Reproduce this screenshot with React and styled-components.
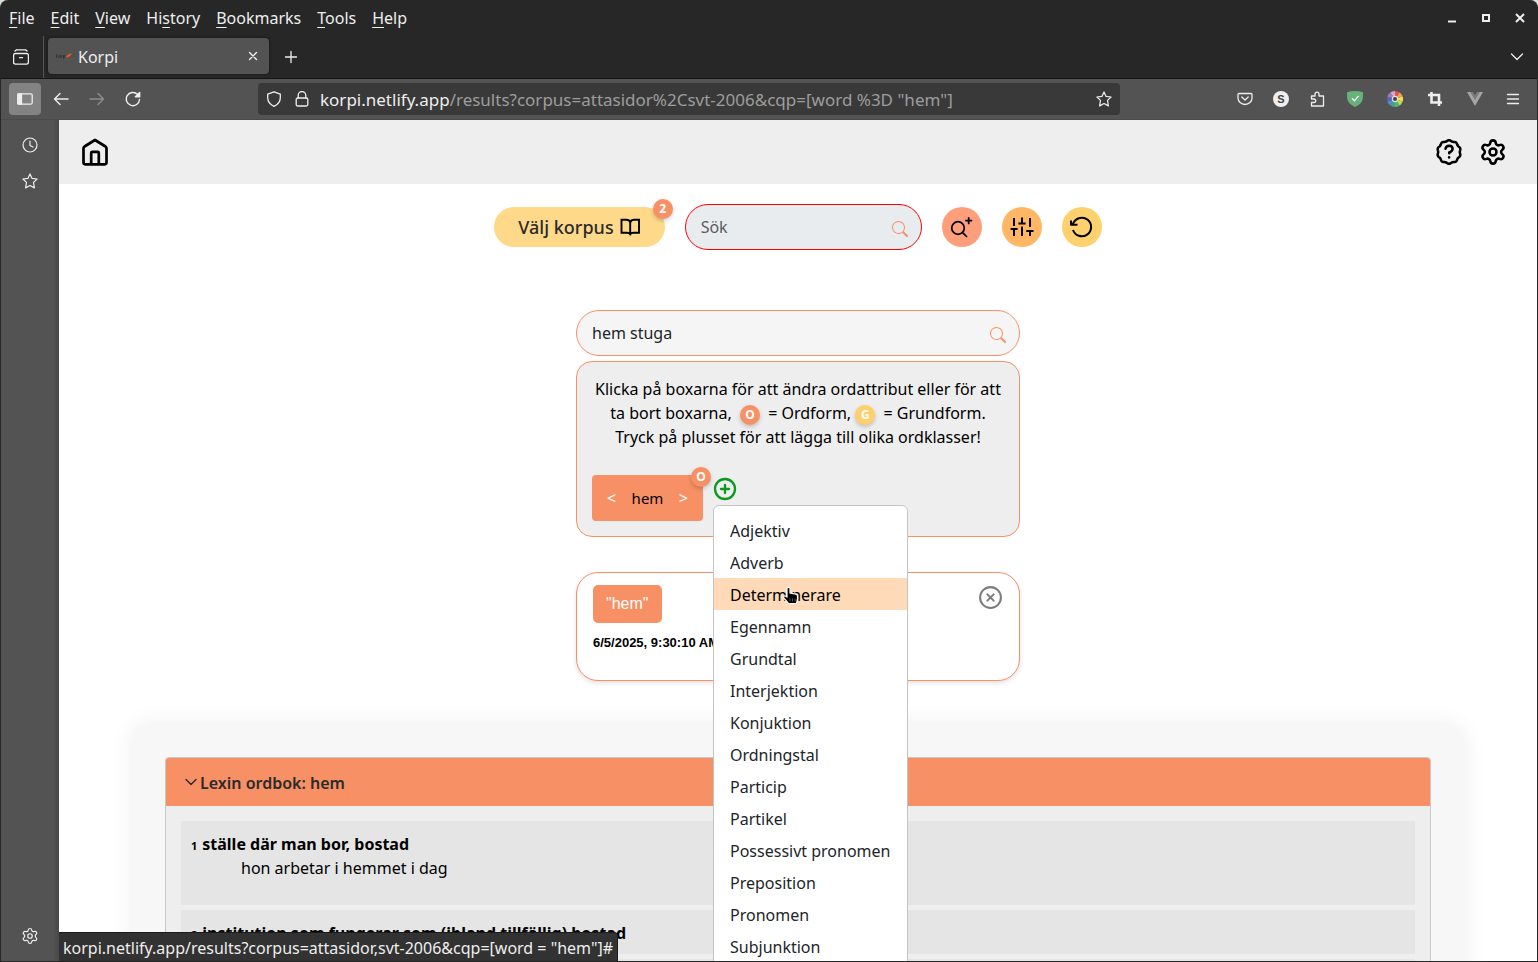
import React from "react";
import styled, { createGlobalStyle } from "styled-components";
import { Settings, CirclePlus, CircleX, Clock } from "lucide-react";
import { BsSearch } from "react-icons/bs";

const GlobalStyle = createGlobalStyle`
  * { box-sizing: border-box; }
  body {
    margin: 0;
    background: #d9dfda;
    font-family: "Noto Sans", sans-serif;
    font-size: 16px;
    line-height: 24px;
    color: #000;
  }
  button, input { font: inherit; color: inherit; }
  button { border: 0; padding: 0; background: none; cursor: pointer; }
  svg { display: block; flex: none; }
`;

/* ---------- Browser frame ---------- */

const Window = styled.div`
  display: flex;
  flex-direction: column;
  height: 100vh;
  overflow: hidden;
  border: solid #272727;
  border-width: 0 1px 1px;
  border-radius: 8px 8px 0 0;
  background: #272727;
  color: #eee;
`;

const MenuBar = styled.nav`
  display: flex;
  align-items: center;
  height: 36px;
  flex: none;
`;

const MenuItem = styled.button`
  padding: 0 8px;
  height: 32px;
  u { text-underline-offset: 3px; text-decoration-thickness: 1px; }
`;

const WindowButtons = styled.div`
  display: flex;
  margin-left: auto;
  gap: 10px;
  padding-right: 5px;
`;

const IconButton = styled.button`
  display: flex;
  align-items: center;
  justify-content: center;
  width: ${(p) => p.$w || 36}px;
  height: 32px;
  border-radius: 4px;
  background: ${(p) => (p.$active ? "#838383" : "none")};
  color: ${(p) => (p.$dim ? "#8c8c8c" : "#eee")};
  flex: none;
`;

const TabBar = styled.div`
  display: flex;
  align-items: center;
  height: 43px;
  padding: 0 2px;
  border-bottom: 1px solid #151515;
  flex: none;
`;

const TabDivider = styled.span`
  width: 1px;
  align-self: stretch;
  margin: 0 4px 0 4px;
  background: #555;
`;

const Tab = styled.div`
  display: flex;
  align-items: center;
  width: 221px;
  height: 36px;
  margin-bottom: 2px;
  padding-left: 8px;
  gap: 6px;
  border-radius: 4px;
  background: #535353;
  box-shadow: 0 0 3px #111;
`;

const TabTitle = styled.span`
  flex: 1;
  padding-top: 2px;
`;

const Grow = styled.span`
  flex: 1;
`;

const ToolBar = styled.div`
  display: flex;
  align-items: center;
  height: 41px;
  padding: 0 6px 0 8px;
  background: #535353;
  border-bottom: 1px solid #4a4a4a;
  flex: none;
`;

const Gap = styled.span`
  width: 2px;
`;

const Spring = styled.span`
  flex: 0 1 107px;
`;

const UrlBar = styled.div`
  display: flex;
  align-items: center;
  flex: 1;
  min-width: 0;
  height: 32px;
  padding: 0 2px;
  border-radius: 4px;
  background: #393939;
  color: #ddd;
`;

const Url = styled.div`
  flex: 1;
  padding: 2px 0 0 4px;
  white-space: nowrap;
  overflow: hidden;
  font-size: 17px;
  color: #9d9d9d;
  b { font-weight: 400; color: #eee; }
`;

const Initial = styled.span`
  width: 16px;
  height: 16px;
  border-radius: 50%;
  background: #eee;
  color: #444;
  font: 700 11px/16px "Liberation Sans", sans-serif;
  text-align: center;
`;

const Content = styled.div`
  display: flex;
  flex: 1;
  min-height: 0;
`;

const SideBar = styled.aside`
  display: flex;
  flex-direction: column;
  align-items: center;
  justify-content: space-between;
  width: 58px;
  padding: 9px 0;
  background: linear-gradient(to right, #535353 52px, #484848);
  flex: none;
`;

const SideGroup = styled.div`
  display: flex;
  flex-direction: column;
  gap: 4px;
`;

const StatusLine = styled.div`
  position: absolute;
  left: 0;
  bottom: 0;
  z-index: 5;
  padding: 3px 4px 1px;
  border: solid #1b1b1b;
  border-width: 1px 1px 0 0;
  border-radius: 0 4px 0 0;
  background: #323232;
  color: #eee;
`;

/* ---------- Korpi page ---------- */

const Page = styled.div`
  position: relative;
  flex: 1;
  min-width: 0;
  overflow: hidden;
  background: #fff;
  color: #000;
`;

const Header = styled.header`
  display: flex;
  align-items: center;
  gap: 12px;
  height: 64px;
  padding: 0 28px 0 20px;
  background: #eee;
`;

const HomeLink = styled.a`
  margin-right: auto;
  color: #000;
`;

const HeaderButton = styled.button`
  display: flex;
  align-items: center;
  justify-content: center;
  width: 32px;
  height: 32px;
`;

const Main = styled.main`
  display: flex;
  flex-direction: column;
  padding-top: 20px;
`;

const SearchRow = styled.div`
  display: flex;
  align-items: center;
  justify-content: center;
  gap: 20px;
  margin-bottom: 60px;
`;

const CorpusButton = styled.button`
  position: relative;
  display: flex;
  align-items: center;
  gap: 4px;
  height: 40px;
  padding: 0 23px 0 24px;
  border-radius: 20px;
  background: #ffd98a;
  color: #2b2b2b;
  font-size: 18px;
  font-weight: 500;
  svg { color: #000; }
`;

const Badge = styled.span`
  display: inline-flex;
  align-items: center;
  justify-content: center;
  width: 20px;
  height: 20px;
  border-radius: 50%;
  background: ${(p) => (p.$base ? "#ffcf6b" : "#f79065")};
  color: #fff;
  font-size: 12px;
  line-height: 20px;
  font-weight: 700;
  box-shadow: 0 2px 4px rgba(0, 0, 0, 0.2);
`;

const InlineBadge = styled(Badge)`
  margin-right: 4px;
  vertical-align: middle;
`;

const CornerBadge = styled(Badge)`
  position: absolute;
  top: -8px;
  right: -8px;
`;

const Field = styled.label`
  display: flex;
  align-items: center;
  width: ${(p) => p.$w};
  height: 46px;
  padding: 0 13px 0 15px;
  border: 1px solid ${(p) => (p.$invalid ? "#f00" : "#f79065")};
  border-radius: 24px;
  background: ${(p) => (p.$invalid ? "#e9ecef" : "#f5f5f5")};
  svg { color: #f79065; margin-top: 3px; }
`;

const TextInput = styled.input`
  flex: 1;
  min-width: 0;
  border: 0;
  padding: 0;
  outline: 0;
  background: none;
  color: #212529;
  &::placeholder { color: #595c5f; opacity: 1; }
`;

const RoundButton = styled.button`
  display: flex;
  align-items: center;
  justify-content: center;
  width: 40px;
  height: 40px;
  border-radius: 50%;
  background: ${(p) => p.$bg};
`;

const Column = styled.div`
  display: flex;
  flex-direction: column;
  width: 444px;
  max-width: 100%;
  margin: 0 auto 44px;
`;

const Builder = styled.section`
  margin: 5px 0 35px;
  padding: 15px;
  border: 1px solid #f79065;
  border-radius: 16px;
  background: #eee;
`;

const Help = styled.p`
  margin: 0 0 26px;
  text-align: center;
`;

const Tokens = styled.div`
  display: flex;
  align-items: flex-start;
  gap: 10px;
`;

const WordBox = styled.div`
  position: relative;
  display: flex;
  align-items: center;
  justify-content: space-between;
  width: 111px;
  height: 46px;
  padding: 0 15px;
  border-radius: 4px;
  background: #f79065;
  font-size: 15px;
`;

const Step = styled.button`
  color: #fff;
  font-size: 16px;
`;

const AddWrap = styled.div`
  position: relative;
  padding-top: 2px;
`;

const AddButton = styled.button`
  display: flex;
  color: #0b9a1e;
`;

const Menu = styled.ul`
  position: absolute;
  top: 30px;
  left: 0;
  z-index: 3;
  width: 195px;
  margin: 0;
  padding: 8px 0;
  list-style: none;
  border: 1px solid #c4c4c4;
  border-radius: 6px;
  background: #fff;
`;

const MenuChoice = styled.button`
  display: block;
  width: 100%;
  padding: 5px 16px 3px;
  text-align: left;
  white-space: nowrap;
  color: ${(p) => (p.$hover ? "#000" : "#212529")};
  background: ${(p) => (p.$hover ? "#ffdab9" : "none")};
`;

const Pointer = styled.svg`
  position: absolute;
  top: 80px;
  left: 68px;
  pointer-events: none;
`;

const HistoryCard = styled.section`
  display: flex;
  align-items: flex-start;
  justify-content: space-between;
  min-height: 109px;
  padding: 12px 16px;
  border: 1px solid #f79065;
  border-radius: 22px;
  background: #fff;
  box-shadow: 0 2px 5px rgba(0, 0, 0, 0.12);
  font-family: "Liberation Sans", sans-serif;
`;

const QueryChip = styled.button`
  display: block;
  height: 38px;
  padding: 0 14px 0 13px;
  margin-bottom: 7px;
  border-radius: 5px;
  background: #f79065;
  color: #fff;
`;

const Stamp = styled.time`
  font-size: 13px;
  font-weight: 700;
`;

const CloseButton = styled.button`
  display: flex;
  color: #7d7d7d;
`;

const Results = styled.section`
  margin: 0 74px;
  padding: 32px;
  border-radius: 16px;
  background: #f7f7f7;
  box-shadow: 0 0 24px rgba(0, 0, 0, 0.08);
`;

const Accordion = styled.div`
  border: 1px solid #c8c8c8;
  border-radius: 4px;
  background: #eee;
  overflow: hidden;
`;

const AccordionHead = styled.button`
  display: flex;
  align-items: center;
  gap: 3px;
  width: 100%;
  height: 48px;
  padding: 2px 19px 0;
  background: #f79065;
  color: #2b2b2b;
  font-weight: 600;
`;

const Senses = styled.div`
  display: flex;
  flex-direction: column;
  gap: 5px;
  padding: 15px;
`;

const Sense = styled.article`
  min-height: 44px;
  padding: 11px 10px 9px;
  background: #e5e5e5;
  b { font-weight: 700; }
  small { font-size: 11px; line-height: 1; font-weight: 700; margin-right: 5px; }
  p { margin: 0 0 16px 50px; }
`;

/* ---------- Icons ---------- */

const Icon = ({ size = 16, sw = 1.2, box = 16, children }) => (
  <svg width={size} height={size} viewBox={`0 0 ${box} ${box}`} fill="none" stroke="currentColor"
    strokeWidth={sw} strokeLinecap="round" strokeLinejoin="round" aria-hidden="true">
    {children}
  </svg>
);

const Star = () => (
  <Icon><path d="M8 .9l2.1 4.5 5 .6-3.6 3.4.9 5.5-4.4-2.4-4.4 2.4.9-5.5L.9 6l5-.6z" /></Icon>
);

const scallop = Array.from({ length: 121 }, (_, i) => {
  const a = (i / 120) * Math.PI * 2;
  const r = 11.3 + 0.5 * Math.cos(10 * a);
  return `${i ? "L" : "M"}${(16 + r * Math.sin(a)).toFixed(2)} ${(16 - r * Math.cos(a)).toFixed(2)}`;
}).join("") + "z";

const wheel = ["#e94f4f", "#f5a04c", "#f3e25a", "#b6dc5a", "#58b868", "#45a08c", "#4c8fd0", "#5a62b8", "#9a7cc8", "#d8a8d0"];
const ringPoint = (i, r) => {
  const a = (i / wheel.length) * Math.PI * 2;
  return `${(8 + r * Math.sin(a)).toFixed(2)} ${(8 - r * Math.cos(a)).toFixed(2)}`;
};

/* ---------- Data ---------- */

const menus = [["", "F", "ile"], ["", "E", "dit"], ["", "V", "iew"], ["Hi", "s", "tory"], ["", "B", "ookmarks"], ["", "T", "ools"], ["", "H", "elp"]];

const wordClasses = ["Adjektiv", "Adverb", "Determinerare", "Egennamn", "Grundtal", "Interjektion", "Konjuktion",
  "Ordningstal", "Particip", "Partikel", "Possessivt pronomen", "Preposition", "Pronomen", "Subjunktion"];

export default function App() {
  return (
    <>
      <GlobalStyle />
      <Window>
        <MenuBar>
          {menus.map(([a, k, b]) => <MenuItem key={k + b}>{a}<u>{k}</u>{b}</MenuItem>)}
          <WindowButtons>
            <IconButton $w={24} aria-label="Minimize"><Icon size={10} box={10} sw={2}><path strokeLinecap="butt" d="M1 8.5h8" /></Icon></IconButton>
            <IconButton $w={24} aria-label="Maximize"><Icon size={10} box={10} sw={2}><path strokeLinejoin="miter" d="M2 2h6v6H2z" /></Icon></IconButton>
            <IconButton $w={24} aria-label="Close window"><Icon size={10} box={10} sw={2}><path strokeLinecap="butt" d="M1 1l8 8M9 1L1 9" /></Icon></IconButton>
          </WindowButtons>
        </MenuBar>

        <TabBar>
          <IconButton aria-label="Recent browsing">
            <Icon sw={1.3}><path d="M3.5.8h9M3.5 .8L2 2M12.500 .8L14 2M2.400 4.500h11.200q1.800 0 1.800 1.800v7q0 1.800-1.800 1.800H2.400q-1.800 0-1.800-1.800v-7q0-1.800 1.800-1.800zM6.500 8.700h3" /></Icon>
          </IconButton>
          <TabDivider />
          <Tab>
            <svg width="16" height="16" viewBox="0 0 16 16" aria-hidden="true">
              <path d="M.5 6v4M.5 8l1.500-1.500M.5 8L2 9.500M3 7.500h1.500v2H3zM5.500 9.500v-2h1M7.500 7.500H9v2H7.500zV11" fill="none" stroke="#262626" strokeWidth=".5" />
              <path d="M9.500 9.500Q12 5.500 16 5.500l-1.800 2.300Q12 10 9.500 9.500z" fill="#f4581c" />
            </svg>
            <TabTitle>Korpi</TabTitle>
            <IconButton $w={32} aria-label="Close tab"><Icon size={10} box={10} sw={1.4}><path d="M1.500 1.500l7 7M8.500 1.500l-7 7" /></Icon></IconButton>
          </Tab>
          <IconButton $w={44} aria-label="New tab"><Icon size={14} box={14} sw={1.3}><path d="M7 1.500v11M1.500 7h11" /></Icon></IconButton>
          <Grow />
          <IconButton aria-label="List all tabs"><Icon size={14} box={14} sw={1.3}><path d="M1.500 4L7 9.500 12.500 4" /></Icon></IconButton>
        </TabBar>

        <ToolBar>
          <IconButton $w={32} $active aria-label="Sidebar">
            <Icon sw={1.3}><rect x=".8" y="2.800" width="14.400" height="10.400" rx="1.500" /><path d="M1 3h3.500v10H1z" fill="currentColor" /></Icon>
          </IconButton>
          <Gap />
          <IconButton aria-label="Back"><Icon sw={1.4}><path d="M15 8H1.500M7 2.500L1.500 8 7 13.500" /></Icon></IconButton>
          <IconButton $dim aria-label="Forward"><Icon sw={1.4}><path d="M1 8h13.500M9 2.500L14.500 8 9 13.500" /></Icon></IconButton>
          <IconButton aria-label="Reload"><Icon sw={1.4}><path d="M14.500 8.500A6.600 6.600 0 1 1 12.500 3.300" /><path d="M14.700 1.500v4.300h-4.300z" fill="currentColor" /></Icon></IconButton>
          <Spring />
          <UrlBar>
            <IconButton $w={28} aria-label="Tracking protection"><Icon sw={1.3}><path d="M8 .8l6.300 2.400v3.600q0 5.600-6.300 8.600Q1.700 12.400 1.700 6.800V3.200z" /></Icon></IconButton>
            <IconButton $w={28} aria-label="Site information"><Icon sw={1.3}><rect x="2.200" y="7" width="11.600" height="8" rx="1.500" /><path d="M4.200 7V4.300a3.800 3.800 0 0 1 7.600 0V7" /></Icon></IconButton>
            <Url role="textbox" tabIndex={0} aria-label="Address"><b>korpi.netlify.app</b>/results?corpus=attasidor%2Csvt-2006&amp;cqp=[word %3D "hem"]</Url>
            <IconButton $w={28} aria-label="Bookmark this page"><Star /></IconButton>
          </UrlBar>
          <Spring />
          <IconButton aria-label="Pocket"><Icon sw={1.3}><path d="M2 2.500h12q1 0 1 1V7A7 6.500 0 0 1 1 7V3.500q0-1 1-1zM4.800 6L8 9l3.200-3" /></Icon></IconButton>
          <IconButton aria-label="Account"><Initial>S</Initial></IconButton>
          <IconButton aria-label="Extensions"><Icon sw={1.3}><path d="M2.500 5H6V3.200a2 2 0 0 1 4 0V5h4.500v10h-12v-3.500H5a1.700 1.700 0 0 0 0-3.500H2.500z" /></Icon></IconButton>
          <IconButton $w={40} aria-label="Ad blocker">
            <svg width="16" height="16" viewBox="0 0 16 16" aria-hidden="true"><path d="M8 0q4 0 8 1.300V6q0 6.500-8 10Q0 12.500 0 6V1.300Q4 0 8 0z" fill="#67b279" /><path d="M5 7.300l2.500 2.400L11.500 5" fill="none" stroke="#fff" strokeWidth="1.300" /></svg>
          </IconButton>
          <IconButton $w={40} aria-label="Colour picker">
            <svg width="16" height="16" viewBox="0 0 16 16" aria-hidden="true">
              {wheel.map((c, i) => <path key={c} fill={c} d={`M8 8L${ringPoint(i, 8)}A8 8 0 0 1 ${ringPoint(i + 1, 8)}z`} />)}
              <circle cx="8" cy="8" r="3.200" fill="#ddd" /><circle cx="8" cy="8" r="2" fill="#444" />
            </svg>
          </IconButton>
          <IconButton $w={40} aria-label="Capture area"><Icon sw={2.6}><path strokeLinecap="butt" strokeLinejoin="miter" d="M1 4h11v11M4.500 1v10.500H15" /></Icon></IconButton>
          <IconButton $w={40} aria-label="Vue devtools">
            <svg width="16" height="14" viewBox="0 0 16 14" aria-hidden="true"><path d="M0 0h3.500L8 7.500 12.500 0H16L8 14z" fill="#a5a5a5" /><path d="M3.500 0H6l2 3.500L10 0h2.500L8 7.700z" fill="#7e7e7e" /></svg>
          </IconButton>
          <IconButton aria-label="Application menu"><Icon sw={1.3}><path d="M2.500 3.500h11M2.500 8h11M2.500 12.500h11" /></Icon></IconButton>
        </ToolBar>

        <Content>
          <SideBar>
            <SideGroup>
              <IconButton aria-label="History"><Icon><circle cx="8" cy="8" r="7" /><path d="M8 4v4.500l3 1.500" /></Icon></IconButton>
              <IconButton aria-label="Bookmarks"><Star /></IconButton>
            </SideGroup>
            <IconButton aria-label="Customize sidebar"><Settings size={18} strokeWidth={1.6} /></IconButton>
          </SideBar>

          <Page>
            <Header>
              <HomeLink href="#" aria-label="Hem">
                <Icon size={32} box={32} sw={2.7}><path d="M16 4l10.500 6.500q1 .7 1 2v14.100q0 1.700-1.700 1.700H6.200q-1.700 0-1.700-1.700V12.500q0-1.300 1-2zM12.200 28V16.900q0-1.100 1.100-1.100h5.400q1.100 0 1.100 1.100V28" /></Icon>
              </HomeLink>
              <HeaderButton aria-label="Hjälp">
                <Icon size={32} box={32} sw={2.5}><path d={scallop} /><path d="M12.500 12.800q.6-3 3.700-3 3.400.2 3.400 3.100 0 2-3.400 3.600v.8" /><path d="M16.100 21.300v.2" /></Icon>
              </HeaderButton>
              <HeaderButton aria-label="Inställningar"><Settings size={28} strokeWidth={2.2} /></HeaderButton>
            </Header>

            <Main>
              <SearchRow>
                <CorpusButton>
                  Välj korpus
                  <Icon size={24} box={24} sw={1.9}><path strokeLinecap="butt" strokeLinejoin="miter" d="M12.200 20V7.500Q11.500 4.800 8.500 4.800H3.500v13H9q2.400 0 3.200 1.400.8-1.400 3.200-1.400H21v-13h-5q-3 0-3.800 2.700" /></Icon>
                  <CornerBadge>2</CornerBadge>
                </CorpusButton>
                <Field $invalid $w="237px">
                  <TextInput placeholder="Sök" aria-label="Sök" />
                  <BsSearch size={16} />
                </Field>
                <RoundButton $bg="#ff9e7a" aria-label="Utökad sökning">
                  <Icon size={24} box={24} sw={1.7}><g strokeLinecap="butt"><circle cx="8" cy="13" r="6.300" /><path d="M12.400 17.400l4.600 4.600M18.700 2.200v7M15.200 5.700h7" /></g></Icon>
                </RoundButton>
                <RoundButton $bg="#ffb765" aria-label="Filter">
                  <Icon size={24} box={24} sw={2}><path strokeLinecap="butt" d="M4 3v8M.6 14h7M4 14v7M12 2.500v6M8.400 8.500h7.200M12 11.500V21M20 3v9M16.300 16h7.200M20 16v5" /></Icon>
                </RoundButton>
                <RoundButton $bg="#ffd06e" aria-label="Återställ">
                  <Icon size={24} box={24} sw={2}><g strokeLinecap="butt"><path d="M3 15A9.300 9.300 0 1 0 3.300 8.200L1.800 9.800M1 5.500v4.300h6.500" /></g></Icon>
                </RoundButton>
              </SearchRow>

              <Column>
                <Field $w="100%">
                  <TextInput defaultValue="hem stuga" aria-label="Enkel sökning" />
                  <BsSearch size={16} />
                </Field>
                <Builder>
                  <Help>
                    Klicka på boxarna för att ändra ordattribut eller för att ta bort boxarna,{" \u00a0"}
                    <InlineBadge>O</InlineBadge> = Ordform, <InlineBadge $base>G</InlineBadge> = Grundform. Tryck på plusset för att lägga till olika ordklasser!
                  </Help>
                  <Tokens>
                    <WordBox>
                      <Step aria-label="Föregående">&lt;</Step>
                      hem
                      <Step aria-label="Nästa">&gt;</Step>
                      <CornerBadge>O</CornerBadge>
                    </WordBox>
                    <AddWrap>
                      <AddButton aria-label="Lägg till ordklass"><CirclePlus size={24} strokeWidth={2.3} /></AddButton>
                      <Menu>
                        {wordClasses.map((w) => (
                          <li key={w}><MenuChoice $hover={w === "Determinerare"}>{w}</MenuChoice></li>
                        ))}
                        <li aria-hidden="true">
                          <Pointer width="18" height="20" viewBox="0 0 18 20">
                            <path d="M5 2.200Q6.500.5 8 2.200V7l6 1.200q1.500.5 1.500 2V13l-1 4.500H6.500L1.800 12q-.8-2 1.200-2.200l2 1.200z" fill="#000" stroke="#fff" strokeWidth="1.200" />
                            <path d="M8 15.500v-3M10.500 15.500v-3M13 15.500v-3" stroke="#888" strokeWidth=".6" />
                          </Pointer>
                        </li>
                      </Menu>
                    </AddWrap>
                  </Tokens>
                </Builder>
                <HistoryCard>
                  <div>
                    <QueryChip>"hem"</QueryChip>
                    <Stamp>6/5/2025, 9:30:10 AM</Stamp>
                  </div>
                  <CloseButton aria-label="Ta bort"><CircleX size={25} strokeWidth={2} /></CloseButton>
                </HistoryCard>
              </Column>

              <Results>
                <Accordion>
                  <AccordionHead aria-expanded="true">
                    <Icon size={12} box={12} sw={1.4}><path d="M1 2.500l5 5 5-5" /></Icon>
                    Lexin ordbok: hem
                  </AccordionHead>
                  <Senses>
                    <Sense>
                      <small>1</small><b>ställe där man bor, bostad</b>
                      <p>hon arbetar i hemmet i dag</p>
                    </Sense>
                    <Sense><small>2</small><b>institution som fungerar som (ibland tillfällig) bostad</b></Sense>
                    <Sense />
                  </Senses>
                </Accordion>
              </Results>
            </Main>
            <StatusLine>korpi.netlify.app/results?corpus=attasidor,svt-2006&amp;cqp=[word = "hem"]#</StatusLine>
          </Page>
        </Content>
      </Window>
    </>
  );
}
